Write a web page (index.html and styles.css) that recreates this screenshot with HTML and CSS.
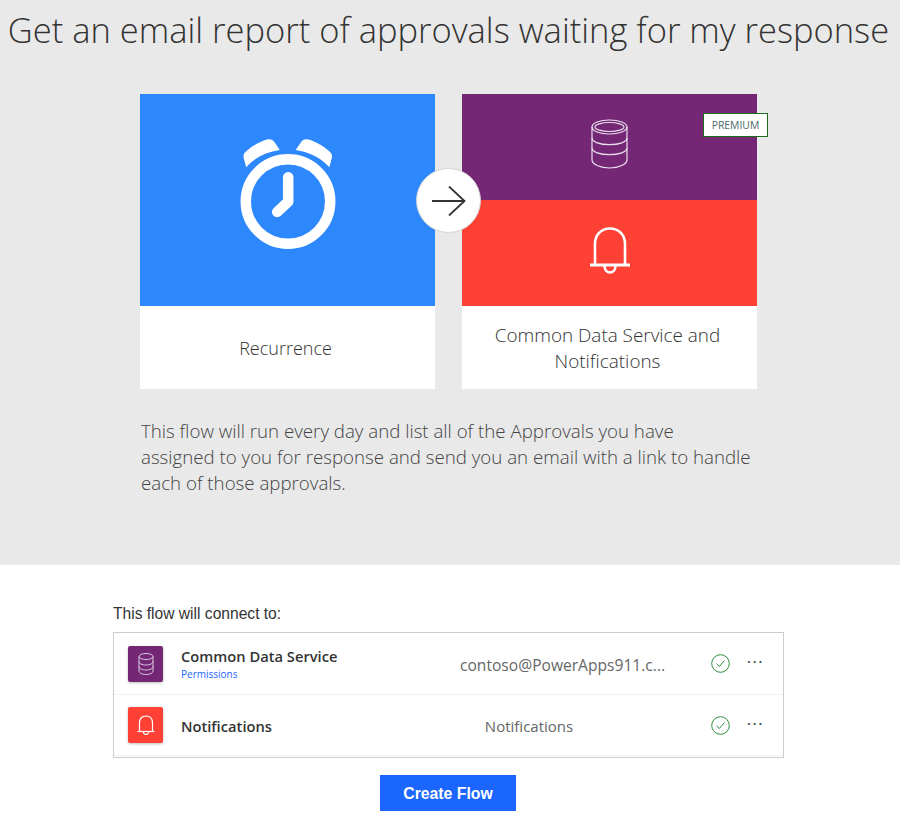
FILE: index.html
```html
<!DOCTYPE html>
<html lang="en">
<head>
    <meta charset="UTF-8">
    <title>Get an email report of approvals waiting for my response</title>
    <link rel="stylesheet" href="styles.css">
</head>
<body>
    <!-- Top section -->
    <div class="hero">
        <h1>Get an email report of approvals waiting for my response</h1>
        <div class="cards">
            <div class="card">
                <div class="card-image blue">
                    <svg class="clock" width="96" height="111" viewBox="0 0 96 111">
                        <circle cx="48" cy="62.5" r="42.2" fill="none" stroke="#fff" stroke-width="10.5"/>
                        <path d="M48.2 38.3V62.7L37.2 73" fill="none" stroke="#fff" stroke-width="10.5" stroke-linecap="round" stroke-linejoin="round"/>
                        <path d="M6.2 28.3L3.7 19C3 16 4 14 6 12.5C12 7 20 2.5 27 .5C30 0 32.5 .5 34 2.5L39.8 11C26 13 14 19 6.2 28.3Z" fill="#fff"/>
                        <path d="M89.3 28.3L91.8 19C92.5 16 91.5 14 89.5 12.5C83.5 7 75.5 2.5 68.5 .5C65.5 0 63 .5 61.5 2.5L55.7 11C69.5 13 81.5 19 89.3 28.3Z" fill="#fff"/>
                    </svg>
                </div>
                <div class="card-label">Recurrence</div>
            </div>
            <div class="card">
                <div class="card-image split">
                    <div class="half purple">
                        <svg class="db-icon" width="37" height="50" viewBox="0 0 37 50" fill="none" stroke="#eadfee" stroke-width="1.2">
                            <ellipse cx="18.5" cy="8" rx="17.5" ry="7"/>
                            <ellipse cx="18.5" cy="8" rx="14.5" ry="4.5"/>
                            <path d="M1 8V41C1 45 9 49 18.5 49S36 45 36 41V8"/>
                            <path d="M1 19C1 23 9 25.7 18.5 25.7S36 23 36 19"/>
                            <path d="M1 29C1 33 9 35.7 18.5 35.7S36 33 36 29"/>
                        </svg>
                    </div>
                    <div class="half red">
                        <svg class="bell-icon" width="40" height="47" viewBox="0 0 40 47" fill="none" stroke="#fff" stroke-width="2.6">
                            <path d="M5 37V17C5 8 11 1.5 20 1.5S35 8 35 17V37"/>
                            <path d="M0 38H40" stroke-width="3"/>
                            <path d="M14.5 39C14.5 43 17 45.5 20 45.5S25.5 43 25.5 39"/>
                        </svg>
                    </div>
                </div>
                <div class="card-label wide">Common Data Service and Notifications</div>
                <span class="premium">PREMIUM</span>
            </div>
            <div class="arrow-circle">
                <svg width="36" height="30" viewBox="0 0 36 30" fill="none" stroke="#333" stroke-width="1.8">
                    <path d="M1 15H34"/>
                    <path d="M18 0.5L33.5 15L18 29.5"/>
                </svg>
            </div>
        </div>
        <p class="description">This flow will run every day and list all of the Approvals you have<br>assigned to you for response and send you an email with a link to handle<br>each of those approvals.</p>
    </div>

    <!-- Connections -->
    <div class="connect">
        <div class="connect-title">This flow will connect to:</div>
        <div class="connect-box">
            <div class="connect-row">
                <div class="connect-icon purple">
                    <svg width="16" height="22" viewBox="0 0 16 22" fill="none" stroke="#d9c8df" stroke-width="1">
                        <ellipse cx="8" cy="3.5" rx="7" ry="3"/>
                        <path d="M1 3.5V18C1 20 4 21.5 8 21.5S15 20 15 18V3.5"/>
                        <path d="M1 8.5C1 10.5 4 12 8 12S15 10.5 15 8.5"/>
                        <path d="M1 13.5C1 15.5 4 17 8 17S15 15.5 15 13.5"/>
                    </svg>
                </div>
                <div class="connect-name">
                    <div class="name">Common Data Service</div>
                    <a class="permissions" href="#">Permissions</a>
                </div>
                <div class="connect-account">contoso@PowerApps911.c...</div>
                <svg class="check" width="19" height="19" viewBox="0 0 19 19" fill="none" stroke="#2e8b3d" stroke-width="1">
                    <circle cx="9.5" cy="9.5" r="8.8"/>
                    <path d="M5.5 9.8L8.3 12.5L13.5 6.5"/>
                </svg>
                <div class="more">···</div>
            </div>
            <div class="connect-row">
                <div class="connect-icon red">
                    <svg width="18" height="20" viewBox="0 0 18 20" fill="none" stroke="#fff" stroke-width="1.2">
                        <path d="M2.5 16V8C2.5 3.5 5 1 9 1S15.5 3.5 15.5 8V16"/>
                        <path d="M0.5 16.5H17.5"/>
                        <path d="M6.5 17C6.5 19 8 19.5 9 19.5S11.5 19 11.5 17"/>
                    </svg>
                </div>
                <div class="connect-name">
                    <div class="name">Notifications</div>
                </div>
                <div class="connect-account centered">Notifications</div>
                <svg class="check" width="19" height="19" viewBox="0 0 19 19" fill="none" stroke="#2e8b3d" stroke-width="1">
                    <circle cx="9.5" cy="9.5" r="8.8"/>
                    <path d="M5.5 9.8L8.3 12.5L13.5 6.5"/>
                </svg>
                <div class="more">···</div>
            </div>
        </div>
        <div class="actions">
            <button class="create-button">Create Flow</button>
        </div>
    </div>
</body>
</html>
```

FILE: styles.css
```css
* {
    margin: 0;
    padding: 0;
    box-sizing: border-box;
}

body {
    font-family: "Open Sans", "Liberation Sans", sans-serif;
    background-color: #fff;
    color: #333;
}

.hero {
    background-color: #e9e9e9;
    height: 565px;
    overflow: hidden;
}

h1 {
    font-size: 34.5px;
    font-weight: 300;
    line-height: 48px;
    color: #333;
    text-align: center;
    white-space: nowrap;
    margin-top: 6px;
    padding-right: 3px;
}

.cards {
    position: relative;
    display: flex;
    gap: 27px;
    width: 617px;
    margin: 40px 0 0 140px;
}

.card {
    position: relative;
    width: 295px;
    height: 295px;
    background-color: #fff;
}

.card-image {
    height: 212px;
}

.blue {
    background-color: #2e88fd;
    display: flex;
    align-items: center;
    justify-content: center;
}

.clock {
    margin-bottom: 11px;
}

.split {
    display: flex;
    flex-direction: column;
}

.half {
    height: 106px;
    display: flex;
    align-items: center;
    justify-content: center;
}

.db-icon {
    margin-bottom: 6px;
}

.bell-icon {
    margin-bottom: 5px;
}

.purple {
    background-color: #742774;
}

.red {
    background-color: #ff4035;
}

.card-label {
    height: 83px;
    padding: 0 24px 0 20px;
    display: flex;
    align-items: center;
    justify-content: center;
    text-align: center;
    font-size: 18px;
    font-weight: 300;
    line-height: 26px;
}

.wide {
    font-size: 18.9px;
}

.premium {
    position: absolute;
    top: 19px;
    right: -11px;
    width: 65px;
    height: 24px;
    border: 1px solid #1e6b1e;
    background-color: #fff;
    color: #4a6a6a;
    font-size: 10.4px;
    line-height: 22px;
    text-align: center;
}

.arrow-circle {
    position: absolute;
    left: 276px;
    top: 74px;
    width: 65px;
    height: 65px;
    border-radius: 50%;
    background-color: #fff;
    border: 1px solid #d4d4d4;
    display: flex;
    align-items: center;
    justify-content: center;
}

.description {
    margin: 29px 0 0 141px;
    font-size: 18.7px;
    font-weight: 300;
    line-height: 26px;
    color: #444;
    white-space: nowrap;
}

.connect {
    width: 671px;
    margin: 0 0 0 113px;
}

.connect-title {
    font-family: "Liberation Sans", Arial, sans-serif;
    font-size: 15.6px;
    line-height: 20px;
    margin-top: 39px;
    color: #333;
}

.connect-box {
    margin-top: 8px;
    height: 126px;
    border: 1px solid #ccc;
}

.connect-row {
    display: flex;
    align-items: center;
    height: 61px;
    padding-left: 14px;
    border-bottom: 1px solid #f1f1f1;
}

.connect-row:first-child {
    height: 62px;
}

.connect-icon {
    width: 35px;
    height: 36px;
    border-radius: 2px;
    box-shadow: 0 1px 3px rgba(0, 0, 0, 0.25);
    display: flex;
    align-items: center;
    justify-content: center;
    flex: none;
}

.connect-name {
    width: 279px;
    margin-left: 18px;
    padding-top: 1px;
    flex: none;
}

.name {
    font-size: 14.7px;
    font-weight: 600;
    line-height: 18px;
    color: #333;
}

.permissions {
    display: block;
    margin-top: 2px;
    font-size: 10px;
    line-height: 14px;
    color: #1a66ff;
    text-decoration: none;
}

.connect-account {
    width: 206px;
    padding-top: 2px;
    flex: none;
    font-size: 15.6px;
    color: #666;
    white-space: nowrap;
}

.centered {
    padding-right: 68px;
    text-align: center;
    font-size: 15px;
}

.check {
    margin-left: 45px;
    flex: none;
}

.more {
    margin: -5px 0 0 16px;
    font-size: 24px;
    font-weight: 300;
    line-height: 20px;
    color: #444;
}

.actions {
    margin-top: 17px;
    text-align: center;
    padding-right: 1px;
}

.create-button {
    width: 136px;
    height: 36px;
    padding-top: 1px;
    border: none;
    background-color: #1a66ff;
    color: #fff;
    font-family: "Liberation Sans", Arial, sans-serif;
    font-size: 15.8px;
    font-weight: bold;
    cursor: pointer;
}
```
